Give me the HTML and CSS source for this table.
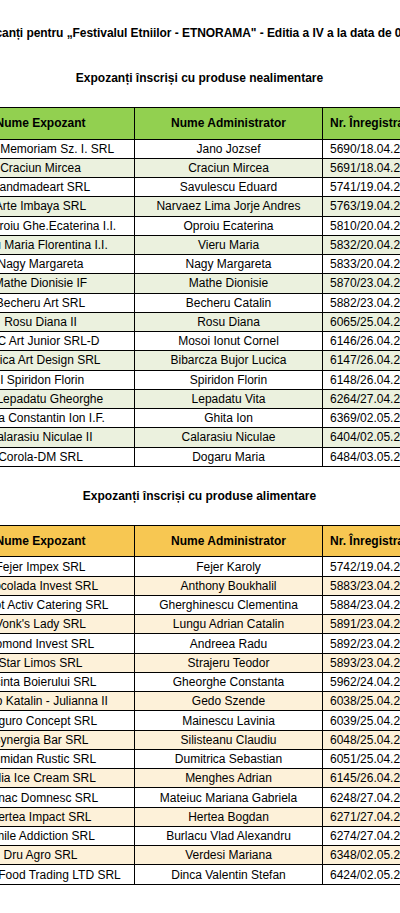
FILE: index.html
```html
<!DOCTYPE html>
<html lang="ro">
<head>
<meta charset="utf-8">
<title>Expozanți ETNORAMA</title>
<link rel="stylesheet" href="styles.css">
</head>
<body>
<div class="page">
  <div class="title"><span>Lista fabricanți pentru „Festivalul Etniilor - ETNORAMA" - Editia a IV a la data de 03.05.2018</span></div>

  <h2 class="subtitle">Expozanți înscriși cu produse nealimentare</h2>
  <table class="tbl green">
    <colgroup><col class="c1"><col class="c2"><col class="c3"></colgroup>
    <thead>
      <tr><th class="ctr">Nume Expozant</th><th class="ctr">Nume Administrator</th><th class="lft">Nr. Înregistrare</th></tr>
    </thead>
    <tbody>
      <tr><td>SC In Memoriam Sz. I. SRL</td><td>Jano Jozsef</td><td class="lft">5690/18.04.2018</td></tr>
      <tr><td>Craciun Mircea</td><td>Craciun Mircea</td><td class="lft">5691/18.04.2018</td></tr>
      <tr><td>Handmadeart SRL</td><td>Savulescu Eduard</td><td class="lft">5741/19.04.2018</td></tr>
      <tr><td>Arte Imbaya SRL</td><td>Narvaez Lima Jorje Andres</td><td class="lft">5763/19.04.2018</td></tr>
      <tr><td>PF Oproiu Ghe.Ecaterina I.I.</td><td>Oproiu Ecaterina</td><td class="lft">5810/20.04.2018</td></tr>
      <tr><td>Vieru Maria Florentina I.I.</td><td>Vieru Maria</td><td class="lft">5832/20.04.2018</td></tr>
      <tr><td>Nagy Margareta</td><td>Nagy Margareta</td><td class="lft">5833/20.04.2018</td></tr>
      <tr><td>Mathe Dionisie IF</td><td>Mathe Dionisie</td><td class="lft">5870/23.04.2018</td></tr>
      <tr><td>Becheru Art SRL</td><td>Becheru Catalin</td><td class="lft">5882/23.04.2018</td></tr>
      <tr><td>Rosu Diana II</td><td>Rosu Diana</td><td class="lft">6065/25.04.2018</td></tr>
      <tr><td>ABC Art Junior SRL-D</td><td>Mosoi Ionut Cornel</td><td class="lft">6146/26.04.2018</td></tr>
      <tr><td>Lucica Art Design SRL</td><td>Bibarcza Bujor Lucica</td><td class="lft">6147/26.04.2018</td></tr>
      <tr><td>II Spiridon Florin</td><td>Spiridon Florin</td><td class="lft">6148/26.04.2018</td></tr>
      <tr><td>PF Lepadatu Gheorghe</td><td>Lepadatu Vita</td><td class="lft">6264/27.04.2018</td></tr>
      <tr><td>Ghita Constantin Ion I.F.</td><td>Ghita Ion</td><td class="lft">6369/02.05.2018</td></tr>
      <tr><td>Calarasiu Niculae II</td><td>Calarasiu Niculae</td><td class="lft">6404/02.05.2018</td></tr>
      <tr><td>Corola-DM SRL</td><td>Dogaru Maria</td><td class="lft">6484/03.05.2018</td></tr>
    </tbody>
  </table>

  <h2 class="subtitle">Expozanți înscriși cu produse alimentare</h2>
  <table class="tbl yellow">
    <colgroup><col class="c1"><col class="c2"><col class="c3"></colgroup>
    <thead>
      <tr><th class="ctr">Nume Expozant</th><th class="ctr">Nume Administrator</th><th class="lft">Nr. Înregistrare</th></tr>
    </thead>
    <tbody>
      <tr><td>Fejer Impex SRL</td><td>Fejer Karoly</td><td class="lft">5742/19.04.2018</td></tr>
      <tr><td>Ciocolada Invest SRL</td><td>Anthony Boukhalil</td><td class="lft">5883/23.04.2018</td></tr>
      <tr><td>Robot Activ Catering SRL</td><td>Gherghinescu Clementina</td><td class="lft">5884/23.04.2018</td></tr>
      <tr><td>Vonk's Lady SRL</td><td>Lungu Adrian Catalin</td><td class="lft">5891/23.04.2018</td></tr>
      <tr><td>Romond Invest SRL</td><td>Andreea Radu</td><td class="lft">5892/23.04.2018</td></tr>
      <tr><td>Star Limos SRL</td><td>Strajeru Teodor</td><td class="lft">5893/23.04.2018</td></tr>
      <tr><td>Incinta Boierului SRL</td><td>Gheorghe Constanta</td><td class="lft">5962/24.04.2018</td></tr>
      <tr><td>Gedo Katalin - Julianna II</td><td>Gedo Szende</td><td class="lft">6038/25.04.2018</td></tr>
      <tr><td>Auguro Concept SRL</td><td>Mainescu Lavinia</td><td class="lft">6039/25.04.2018</td></tr>
      <tr><td>Synergia Bar SRL</td><td>Silisteanu Claudiu</td><td class="lft">6048/25.04.2018</td></tr>
      <tr><td>Dumidan Rustic SRL</td><td>Dumitrica Sebastian</td><td class="lft">6051/25.04.2018</td></tr>
      <tr><td>Italia Ice Cream SRL</td><td>Menghes Adrian</td><td class="lft">6145/26.04.2018</td></tr>
      <tr><td>Conac Domnesc SRL</td><td>Mateiuc Mariana Gabriela</td><td class="lft">6248/27.04.2018</td></tr>
      <tr><td>Hertea Impact SRL</td><td>Hertea Bogdan</td><td class="lft">6271/27.04.2018</td></tr>
      <tr><td>Smile Addiction SRL</td><td>Burlacu Vlad Alexandru</td><td class="lft">6274/27.04.2018</td></tr>
      <tr><td>Dru Agro SRL</td><td>Verdesi Mariana</td><td class="lft">6348/02.05.2018</td></tr>
      <tr><td>Global Food Trading LTD SRL</td><td>Dinca Valentin Stefan</td><td class="lft">6424/02.05.2018</td></tr>
    </tbody>
  </table>
</div>
</body>
</html>
```

FILE: styles.css
```css
html, body {
  margin: 0;
  padding: 0;
  background: #ffffff;
  overflow: hidden;
}

body {
  font-family: "Liberation Sans", Arial, sans-serif;
  font-size: 12px;
  color: #000000;
}

.page {
  width: 507px;
  margin-left: -54px;
  padding-top: 25px;
}

.title {
  display: flex;
  justify-content: center;
  height: 16px;
  line-height: 16px;
  padding-right: 6px;
  font-weight: bold;
  letter-spacing: -0.06px;
  white-space: nowrap;
}

.subtitle {
  margin: 29px 0 21px;
  height: 16px;
  line-height: 16px;
  font-size: 12px;
  font-weight: bold;
  text-align: center;
  white-space: nowrap;
}

.tbl + .subtitle {
  margin-top: 21px;
}

.tbl {
  width: 507px;
  table-layout: fixed;
  border-collapse: collapse;
}

.c1, .c2 { width: 188px; }
.c3 { width: 131px; }

.tbl th,
.tbl td {
  border: 1px solid #000000;
  padding: 0 7px;
  white-space: nowrap;
  overflow: hidden;
  text-align: center;
  vertical-align: middle;
  line-height: 14px;
}

.tbl th {
  height: 30.6px;
  font-weight: bold;
}

.tbl td {
  height: 18.25px;
}

.tbl .lft { text-align: left; }
.tbl .ctr { text-align: center; }

.green th { background: #92d050; }
.green tbody tr:nth-child(even) td { background: #ebf1de; }

.yellow th { background: #f7c752; }
.yellow tbody tr:nth-child(even) td { background: #fdf1d9; }
```
